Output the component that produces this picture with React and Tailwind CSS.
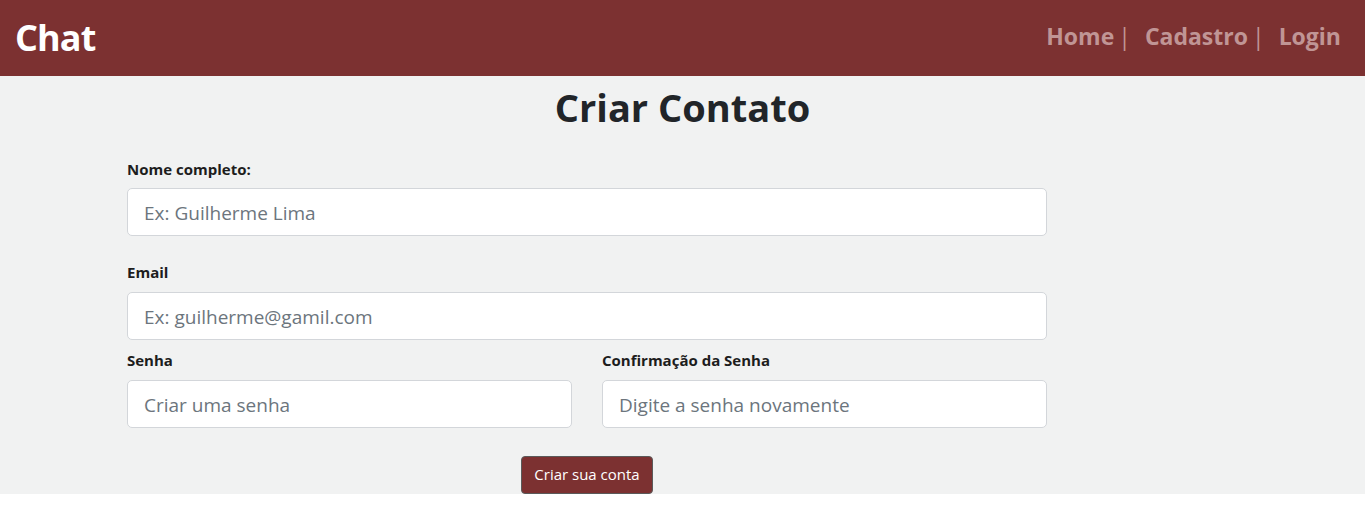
export default function App() {
  const font = { fontFamily: '"Open Sans", "Noto Sans", sans-serif' };

  return (
    <div className="w-[1365px] h-[511px] bg-white" style={font}>
      {/* ── Header ── */}
      <header className="h-[76px] bg-[#7c3131] flex items-center justify-between pl-[15px] pr-[24px]">
        <div className="text-[36px] font-bold text-white tracking-tight">Chat</div>
        <nav className="flex items-center text-[23px] font-bold text-[#c09595] mb-[4px]">
          <span>Home</span>
          <span className="font-normal ml-[4px]">|</span>
          <span className="ml-[14px]">Cadastro</span>
          <span className="font-normal ml-[4px]">|</span>
          <span className="ml-[14px]">Login</span>
        </nav>
      </header>

      {/* ── Form Area ── */}
      <main className="bg-[#f1f2f2] h-[418px] flex flex-col items-center">
        <h1 className="text-[38px] font-bold text-[#212529] mt-[9px] leading-[1.2]">Criar Contato</h1>

        <form className="w-[920px] ml-[-191px] mt-[28px] flex flex-col">
          <label className="text-[15px] font-bold text-[#1d1d1d] leading-[20px]">Nome completo:</label>
          <input
            placeholder="Ex: Guilherme Lima"
            className="mt-[9px] h-[48px] bg-white border border-[#d3d6da] rounded-[5px] px-4 pt-[3px] text-[19px] text-[#212529] placeholder:text-[#6c757d] outline-none"
          />

          <label className="mt-[26px] text-[15px] font-bold text-[#1d1d1d] leading-[20px]">Email</label>
          <input
            placeholder="Ex: guilherme@gamil.com"
            className="mt-[10px] h-[48px] bg-white border border-[#d3d6da] rounded-[5px] px-4 pt-[3px] text-[19px] text-[#212529] placeholder:text-[#6c757d] outline-none"
          />

          <div className="grid grid-cols-2 gap-[30px] mt-[10px]">
            <div className="flex flex-col">
              <label className="text-[15px] font-bold text-[#1d1d1d] leading-[20px]">Senha</label>
              <input
                placeholder="Criar uma senha"
                className="mt-[10px] h-[48px] bg-white border border-[#d3d6da] rounded-[5px] px-4 pt-[3px] text-[19px] text-[#212529] placeholder:text-[#6c757d] outline-none"
              />
            </div>
            <div className="flex flex-col">
              <label className="text-[15px] font-bold text-[#1d1d1d] leading-[20px]">Confirmação da Senha</label>
              <input
                placeholder="Digite a senha novamente"
                className="mt-[10px] h-[48px] bg-white border border-[#d3d6da] rounded-[5px] px-4 pt-[3px] text-[19px] text-[#212529] placeholder:text-[#6c757d] outline-none"
              />
            </div>
          </div>

          <div className="flex justify-center mt-[28px]">
            <button
              type="button"
              className="h-[38px] px-3 bg-[#7c3131] text-white text-[15px] rounded-[4px] border border-[#5a5a5a]"
            >
              Criar sua conta
            </button>
          </div>
        </form>
      </main>
    </div>
  );
}
